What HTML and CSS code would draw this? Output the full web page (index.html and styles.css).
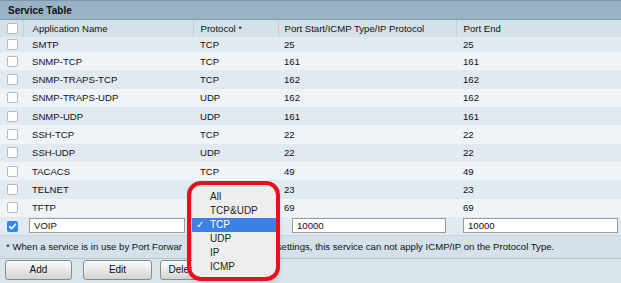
FILE: index.html
```html
<!DOCTYPE html>
<html>
<head>
<meta charset="utf-8">
<link rel="stylesheet" href="styles.css">
</head>
<body>
<div class="panel">
  <div class="title">Service Table</div>
  <table class="grid">
    <colgroup>
      <col class="w-chk"><col class="w-name"><col class="w-proto"><col class="w-start"><col class="w-end">
    </colgroup>
    <thead>
      <tr class="head">
        <th class="chk"><span class="cb"></span></th>
        <th class="name">Application Name</th>
        <th>Protocol *</th>
        <th>Port Start/ICMP Type/IP Protocol</th>
        <th>Port End</th>
      </tr>
    </thead>
    <tbody>
      <tr class="short"><td class="chk"><span class="cb"></span></td><td class="name">SMTP</td><td>TCP</td><td>25</td><td>25</td></tr>
      <tr><td class="chk"><span class="cb"></span></td><td class="name">SNMP-TCP</td><td>TCP</td><td>161</td><td>161</td></tr>
      <tr><td class="chk"><span class="cb"></span></td><td class="name">SNMP-TRAPS-TCP</td><td>TCP</td><td>162</td><td>162</td></tr>
      <tr><td class="chk"><span class="cb"></span></td><td class="name">SNMP-TRAPS-UDP</td><td>UDP</td><td>162</td><td>162</td></tr>
      <tr><td class="chk"><span class="cb"></span></td><td class="name">SNMP-UDP</td><td>UDP</td><td>161</td><td>161</td></tr>
      <tr><td class="chk"><span class="cb"></span></td><td class="name">SSH-TCP</td><td>TCP</td><td>22</td><td>22</td></tr>
      <tr><td class="chk"><span class="cb"></span></td><td class="name">SSH-UDP</td><td>UDP</td><td>22</td><td>22</td></tr>
      <tr><td class="chk"><span class="cb"></span></td><td class="name">TACACS</td><td>TCP</td><td>49</td><td>49</td></tr>
      <tr><td class="chk"><span class="cb"></span></td><td class="name">TELNET</td><td>TCP</td><td>23</td><td>23</td></tr>
      <tr><td class="chk"><span class="cb"></span></td><td class="name">TFTP</td><td>UDP</td><td>69</td><td>69</td></tr>
      <tr class="edit">
        <td class="chk"><span class="cb on"><svg viewBox="0 0 11 11" width="11" height="11"><path d="M2.6 5.6 L4.6 7.7 L8.5 3.2" fill="none" stroke="#fff" stroke-width="1.6" stroke-linecap="round" stroke-linejoin="round"/></svg></span></td>
        <td class="in-name"><span class="field f-name">VOIP</span></td>
        <td class="in-proto"><span class="sel">TCP<span class="arr">&#x21D5;</span></span></td>
        <td class="in-start"><span class="field f-start">10000</span></td>
        <td class="in-end"><span class="field f-end">10000</span></td>
      </tr>
    </tbody>
  </table>
  <div class="note">* When a service is in use by Port Forwa<span class="under">rdin</span>g settings, this service can not apply ICMP/IP on the Protocol Type.</div>
  <div class="actions">
    <button class="btn b-add">Add</button>
    <button class="btn b-edit">Edit</button>
    <button class="btn b-del">Delete</button>
  </div>
  <div class="menu">
    <div class="item">All</div>
    <div class="item">TCP&amp;UDP</div>
    <div class="item sel-item"><span class="tick">&#x2713;</span>TCP</div>
    <div class="item">UDP</div>
    <div class="item">IP</div>
    <div class="item">ICMP</div>
  </div>
  <div class="ring"></div>
</div>
</body>
</html>
```
FILE: styles.css
```css
html, body {
  margin: 0;
  padding: 0;
  background: #dae4eb;
}
body {
  font-family: "Liberation Sans", Arial, sans-serif;
  font-size: 9.6px;
  color: #111;
}
.panel {
  position: relative;
  width: 621px;
  height: 283px;
  overflow: hidden;
}
.title {
  height: 18px;
  line-height: 19px;
  padding-left: 8px;
  background: #97b3c5;
  border-top: 1px solid #7c97aa;
  border-bottom: 1px solid #829cae;
  font-weight: bold;
  font-size: 10px;
  color: #111;
}
.grid {
  width: 621px;
  table-layout: fixed;
  border-collapse: collapse;
  border-spacing: 0;
}
.w-chk { width: 23px; }
.w-name { width: 170px; }
.w-proto { width: 85px; }
.w-start { width: 178px; }
.w-end { width: 165px; }

th, td {
  padding: 0 0 0 7px;
  text-align: left;
  font-weight: normal;
  white-space: nowrap;
  overflow: hidden;
  vertical-align: middle;
}
.grid th:nth-child(4), .grid td:nth-child(4) { padding-left: 6px; }
.head { height: 17px; background: #d5e1e9; }
.head th { border-left: 1px solid #c3d0da; }
.head th.chk { border-left: none; }
th.name, td.name { padding-left: 9px; }
tbody tr { height: 18.33px; }
tbody tr:nth-child(odd) { background: #e2eaf1; }
tbody tr:nth-child(even) { background: #eff4f8; }
tbody tr.short { height: 15px; }
tbody tr.edit { height: 18px; }

.chk { padding-left: 7px; }
.cb {
  display: block;
  width: 9px;
  height: 9px;
  background: #fff;
  border: 1px solid #b9b9b9;
  border-radius: 2px;
}
.cb.on {
  width: 11px;
  height: 11px;
  border: none;
  background: #2f86ee;
  margin-top: 2px;
}
.cb svg { display: block; }

.field {
  display: block;
  height: 13px;
  line-height: 13px;
  background: #fff;
  border: 1px solid #9c9c9c;
  padding-left: 4px;
  box-sizing: content-box;
}
.in-name { padding-left: 6px; }
.f-name { width: 150px; }
.in-proto { padding-left: 4px; }
.sel {
  display: block;
  position: relative;
  width: 82px;
  height: 14px;
  line-height: 14px;
  background: #fdfdfd;
  border: 1px solid #a5a5a5;
  border-radius: 3px;
  padding-left: 4px;
}
.arr {
  position: absolute;
  right: 1px;
  top: 0;
  font-size: 8px;
  color: #555;
}
.grid td.in-start { padding-left: 14px; }
.f-start { width: 148px; }
.in-end { padding-left: 7px; }
.f-end { width: 149px; }

.note {
  height: 22px;
  line-height: 21px;
  padding-left: 6px;
  background: #d5e1ea;
  border-top: 1px solid #c9d6df;
  border-bottom: 1px solid #b7c7d2;
  white-space: nowrap;
}
.under {
  display: inline-block;
  width: 90px;
  letter-spacing: 18px;
}
.actions {
  display: flex;
  padding: 1px 0 0 5px;
  height: 23px;
  border-bottom: 1px solid #a9bccb;
}
.btn {
  width: 67px;
  height: 20px;
  margin: 0;
  padding: 0;
  font-family: "Liberation Sans", Arial, sans-serif;
  font-size: 10px;
  color: #111;
  background: linear-gradient(#fbfbfb, #e6e6e6 55%, #d2d2d2);
  border: 1px solid #8a8a8a;
  border-radius: 3px;
}
.b-edit { width: 69px; margin-left: 11px; }
.b-del { width: 70px; margin-left: 8px; padding-right: 24px; }

.menu {
  position: absolute;
  left: 192px;
  top: 187px;
  width: 85px;
  height: 90px;
  padding-top: 3px;
  box-sizing: border-box;
  background: #eeeeee;
  border-radius: 5px;
  box-shadow: 0 2px 6px rgba(0,0,0,0.3);
  font-size: 10px;
  color: #222;
}
.item {
  position: relative;
  height: 14px;
  line-height: 14px;
  padding-left: 18px;
}
.sel-item {
  background: #3c82e6;
  color: #fff;
}
.tick {
  position: absolute;
  left: 4px;
  top: 0;
  font-family: "DejaVu Sans", sans-serif;
  font-size: 10px;
}
.ring {
  position: absolute;
  left: 187px;
  top: 181px;
  width: 93px;
  height: 100px;
  box-sizing: border-box;
  border: 4px solid #e3121c;
  border-radius: 14px;
}
```
